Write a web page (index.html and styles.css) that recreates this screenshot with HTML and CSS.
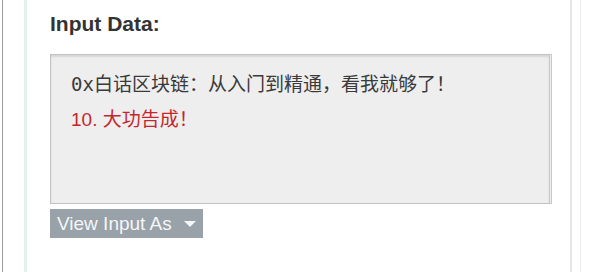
FILE: index.html
```html
<!DOCTYPE html>
<html lang="zh-CN">
<head>
  <meta charset="UTF-8">
  <meta name="viewport" content="width=device-width, initial-scale=1.0">
  <title>Input Data</title>
  <link rel="stylesheet" href="styles.css">
</head>
<body>
  <div class="frame">
    <div class="panel">
      <h2 class="label">Input Data:</h2>
      <div class="input-box">
        <div class="line">0x白话区块链：从入门到精通，看我就够了！</div>
        <div class="line line-red">10. 大功告成！</div>
      </div>
      <button class="view-btn" type="button">
        View Input As
        <span class="caret"></span>
      </button>
    </div>
  </div>
</body>
</html>
```

FILE: styles.css
```css
body {
  margin: 0;
  background-color: #ffffff;
  font-family: "Liberation Sans", Arial, sans-serif;
}
.frame {
  margin: 0 19px 0 2px;
  height: 272px;
  border-left: 1px solid #9a9a9a;
  border-right: 1px solid #ececec;
  padding: 0 8px 0 21px;
}
.panel {
  height: 100%;
  border-left: 3px solid #e2f1ec;
  border-right: 2px solid #e6e6e6;
  padding: 12px 18px 0 23px;
  box-sizing: border-box;
}
.label {
  margin: 0 0 19px;
  font-size: 21px;
  line-height: 23px;
  font-weight: bold;
  color: #333333;
}
.input-box {
  height: 150px;
  box-sizing: border-box;
  border: 1px solid #c2c2c2;
  border-right: 3px double #c8c8c8;
  background-color: #eeeeee;
  box-shadow: inset 0 2px 2px rgba(0, 0, 0, 0.1);
  padding: 11px 20px 0;
}
.line {
  font-family: "DejaVu Sans Mono", "Noto Sans CJK SC", monospace;
  font-size: 19px;
  line-height: 36px;
  color: #3a3a3a;
}
.line-red {
  font-family: "Liberation Sans", "Noto Sans CJK SC", sans-serif;
  color: #c4262e;
}
.view-btn {
  margin-top: 5px;
  display: flex;
  align-items: center;
  height: 29px;
  padding: 0 7px;
  border: none;
  background-color: #99a1a9;
  color: #f4f6f8;
  font-family: "Liberation Sans", Arial, sans-serif;
  font-size: 19px;
}
.caret {
  margin-left: 12px;
  width: 0;
  height: 0;
  border-left: 6px solid transparent;
  border-right: 6px solid transparent;
  border-top: 6px solid #f4f6f8;
}
```
